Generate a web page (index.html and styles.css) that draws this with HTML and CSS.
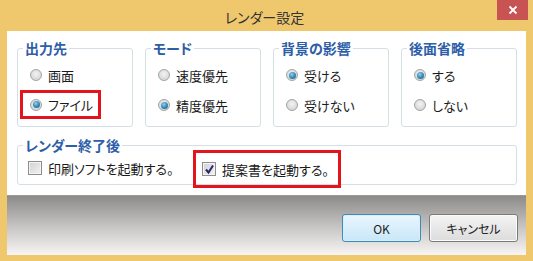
FILE: index.html
```html
<!DOCTYPE html>
<html lang="ja">
<head>
    <meta charset="utf-8">
    <title>レンダー設定</title>
    <link rel="stylesheet" href="styles.css">
</head>
<body>
    <div class="window">
        <!-- Barra de título -->
        <div class="titlebar">
            <div class="title">レンダー設定</div>
            <div class="close">
                <svg width="10" height="10" viewBox="0 0 10 10"><path d="M1.5 1.5 L8.5 8.5 M8.5 1.5 L1.5 8.5" stroke="#fff" stroke-width="1.8"/></svg>
            </div>
        </div>

        <div class="client">
            <div class="row">
                <fieldset class="group">
                    <legend>出力先</legend>
                    <div class="opt"><span class="radio"></span>画面</div>
                    <div class="opt mark"><span class="radio on"></span>ファイル</div>
                </fieldset>
                <fieldset class="group">
                    <legend>モード</legend>
                    <div class="opt"><span class="radio"></span>速度優先</div>
                    <div class="opt"><span class="radio on"></span>精度優先</div>
                </fieldset>
                <fieldset class="group">
                    <legend>背景の影響</legend>
                    <div class="opt"><span class="radio on"></span>受ける</div>
                    <div class="opt"><span class="radio"></span>受けない</div>
                </fieldset>
                <fieldset class="group">
                    <legend>後面省略</legend>
                    <div class="opt"><span class="radio on"></span>する</div>
                    <div class="opt"><span class="radio"></span>しない</div>
                </fieldset>
            </div>

            <fieldset class="group after">
                <legend>レンダー終了後</legend>
                <div class="checks">
                    <div class="chk first"><span class="box"></span>印刷ソフトを起動する。</div>
                    <div class="chk mark2"><span class="box">
                        <svg width="11" height="11" viewBox="0 0 11 11"><path d="M2 5.5 L4.5 8.5 L9 1.5" fill="none" stroke="#26266e" stroke-width="2"/></svg>
                    </span>提案書を起動する。</div>
                </div>
            </fieldset>
        </div>

        <!-- Pie con los botones -->
        <div class="footer">
            <div class="btn ok">OK</div>
            <div class="btn cancel">キャンセル</div>
        </div>
    </div>
</body>
</html>
```

FILE: styles.css
```css
/* Estilos del diálogo */
body {
    margin: 0;
    background: #efc86e;
    font-family: "Noto Sans CJK JP", sans-serif;
    font-feature-settings: "palt";
    color: #1a1a1a;
}

.window {
    width: 533px;
    height: 261px;
    background: #efc86e;
}

.titlebar {
    height: 31px;
    display: flex;
    align-items: flex-start;
    padding-left: 32px;
}

.title {
    flex: 1;
    text-align: center;
    font-size: 14px;
    line-height: 16px;
    padding-top: 9px;
    color: #333;
}

.close {
    width: 31px;
    height: 20px;
    margin-right: 5px;
    background: #c85353;
    display: flex;
    align-items: center;
    justify-content: center;
}

.client {
    margin: 0 7px;
    height: 164px;
    background: #fff;
    padding: 9px 9px 0 10px;
    box-sizing: border-box;
}

.row {
    display: flex;
    gap: 12px;
}

.group {
    flex: 1;
    margin: 0;
    padding: 4px 0 6px 5px;
    border: 1px solid #d6dee6;
    border-radius: 3px;
    min-width: 0;
}

.group legend {
    padding: 0 2px;
    font-size: 14px;
    line-height: 16px;
    font-weight: bold;
    color: #2d5ea8;
}

.opt {
    display: flex;
    align-items: center;
    height: 30px;
    margin-left: -3px;
    border: 3px solid transparent;
    padding-left: 7px;
    box-sizing: border-box;
    font-size: 13px;
}

.opt.mark {
    border-color: #e3141b;
    width: 81px;
    height: 29px;
}

.radio {
    width: 12px;
    height: 12px;
    border-radius: 50%;
    border: 1px solid #a3a3a3;
    box-sizing: border-box;
    background: radial-gradient(circle at 50% 40%, #f4f4f4 0%, #d4d4d4 80%);
    margin-right: 6px;
    display: flex;
    align-items: center;
    justify-content: center;
}

.radio.on::after {
    content: "";
    width: 7px;
    height: 7px;
    border-radius: 50%;
    background: radial-gradient(circle at 40% 35%, #8fd0ef 0%, #2f86b4 55%, #1d5c80 100%);
}

.after {
    margin-top: 10px;
    padding: 5px 0 6px 5px;
}

.checks {
    display: flex;
    align-items: center;
    height: 20px;
}

.chk {
    display: flex;
    align-items: center;
    font-size: 13px;
}

.chk.first {
    width: 170px;
    padding-left: 5px;
    box-sizing: border-box;
}

.chk.mark2 {
    width: 148px;
    height: 38px;
    margin: -8px 0 -10px 0;
    border: 3px solid #e3141b;
    padding-left: 6px;
    box-sizing: border-box;
}

.box {
    width: 14px;
    height: 14px;
    border: 1px solid #8e8e8e;
    box-sizing: border-box;
    background: linear-gradient(135deg, #d2d2d2, #f2f2f2);
    box-shadow: inset 0 0 0 1px #f4f4f4;
    margin-right: 6px;
    display: flex;
    align-items: center;
    justify-content: center;
}

.footer {
    margin: 0 7px;
    height: 60px;
    background: linear-gradient(#8d8b89, #c9c8c7 55%, #f7f6f4);
    border-top: 1px solid #9a9a9a;
    box-sizing: border-box;
    display: flex;
    justify-content: flex-end;
    align-items: flex-start;
    gap: 8px;
    padding: 18px 8px 0 0;
}

.btn {
    height: 28px;
    border-radius: 3px;
    box-sizing: border-box;
    display: flex;
    align-items: center;
    justify-content: center;
    font-size: 12px;
    color: #222;
}

.ok {
    width: 79px;
    border: 1px solid #3d8cb8;
    background: linear-gradient(#eaf6fd, #c8e7f8);
    box-shadow: inset 0 0 0 1px #d8effb;
}

.cancel {
    width: 89px;
    border: 1px solid #7a7a7a;
    background: linear-gradient(#f4f4f4, #dcdcdc);
    box-shadow: inset 0 0 0 1px #fbfbfb;
}
```
